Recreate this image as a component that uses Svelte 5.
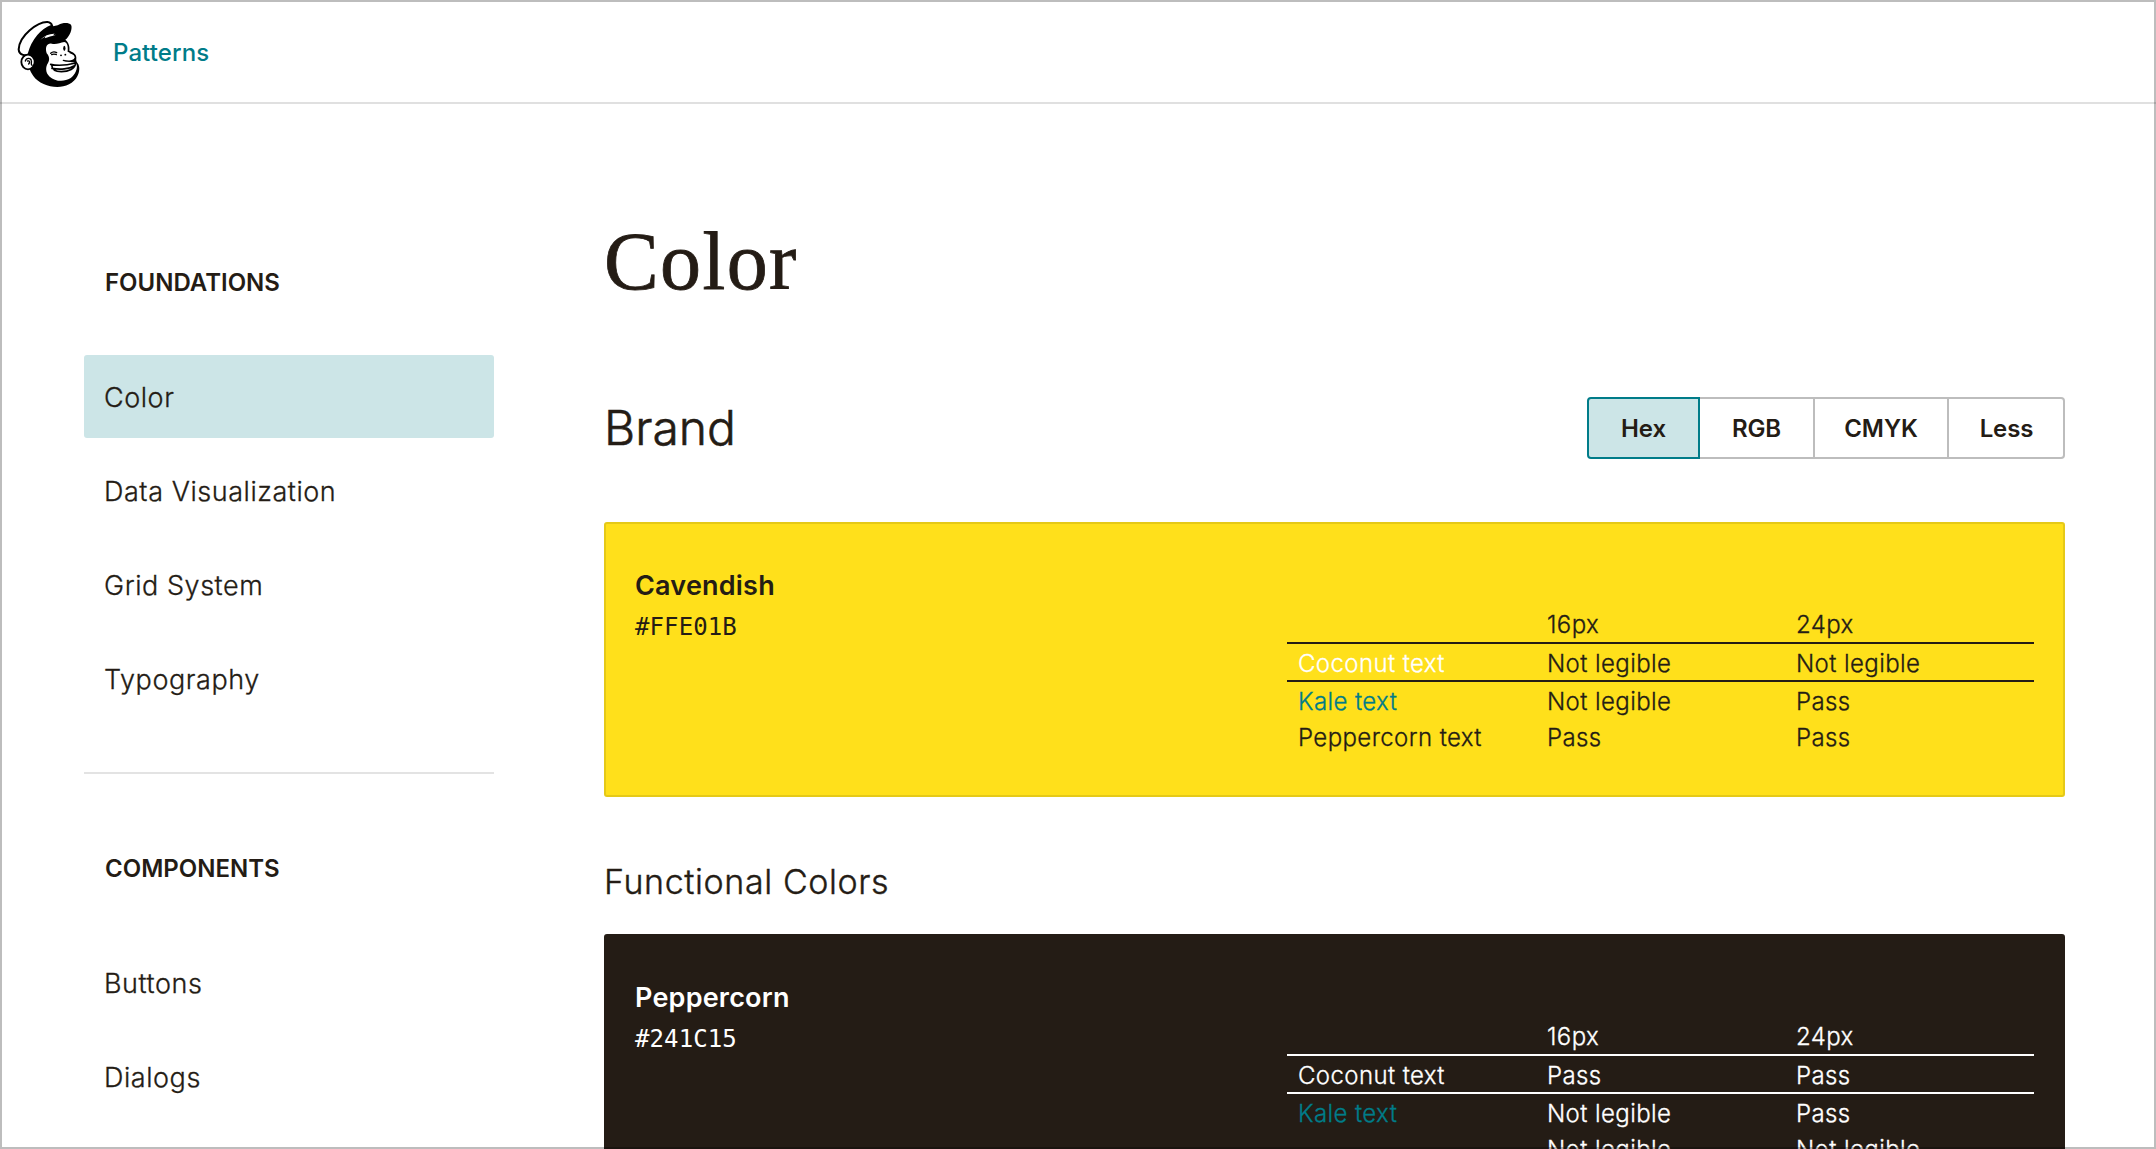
<script>
  const foundations = ['Color', 'Data Visualization', 'Grid System', 'Typography'];
  const components = ['Buttons', 'Dialogs'];
  const formats = ['Hex', 'RGB', 'CMYK', 'Less'];
  const textColors = ['coconut', 'kale', 'peppercorn'];
  const brand = [
    ['Coconut text', 'Not legible', 'Not legible'],
    ['Kale text', 'Not legible', 'Pass'],
    ['Peppercorn text', 'Pass', 'Pass'],
  ];
  const functional = [
    ['Coconut text', 'Pass', 'Pass'],
    ['Kale text', 'Not legible', 'Pass'],
    ['Peppercorn text', 'Not legible', 'Not legible'],
  ];
</script>

{#snippet swatch(name, hex, tone, rows)}
  <article class="card {tone}">
    <div class="label">
      <h4>{name}</h4>
      <code>{hex}</code>
    </div>
    <table>
      <thead><tr><th></th><th>16px</th><th>24px</th></tr></thead>
      <tbody>
        {#each rows as row, i}
          <tr><td class={textColors[i]}>{row[0]}</td><td>{row[1]}</td><td>{row[2]}</td></tr>
        {/each}
      </tbody>
    </table>
  </article>
{/snippet}

<div class="page">
  <header>
    <svg class="logo" viewBox="0 0 228 240" aria-label="Freddie">
      <!-- head and cap brim -->
      <path d="M52 124C58 98 74 66 98 50C108 42 118 37 128 34L131 37C138 34 142 34 146 32C156 26 176 24 183 32C189 42 179 68 166 77C176 84 180 98 178 110C188 114 200 120 199 132C198 138 199 142 203 148C211 158 208 176 202 187C192 208 166 219 142 219C114 219 84 206 70 186C60 172 50 150 52 124Z" />
      <!-- cap crown -->
      <path class="crown" d="M56 120C50 128 27 124 26 106C28 64 84 23 112 24C120 25 125 29 126 35C96 46 68 76 56 120Z" />
      <path class="w" d="M91 77C103 65 120 58 134 59L129 64L139 62C126 67 113 68 104 73L107 67Z" />
      <!-- face -->
      <path class="w" d="M110 118C104 98 112 87 125 89C138 93 150 86 163 84C174 87 174 101 173 114C184 116 195 122 195 131C193 139 180 143 168 140C179 145 193 143 199 149C205 162 195 183 181 193C163 204 135 203 119 188C106 176 106 159 114 147C120 138 118 126 110 118Z" />
      <path class="line" d="M180 116C190 119 197 126 196 132C194 141 177 144 160 139M122 118C127 113 135 113 140 116M125 122C131 118 136 121 139 122" />
      <ellipse cx="163" cy="103" rx="3.4" ry="8" />
      <circle cx="153" cy="124" r="2.8" /><circle cx="166" cy="122" r="2.8" />
      <!-- smile -->
      <path class="line lip" d="M122 151C145 156 173 153 197 147C196 164 176 173 154 173C137 173 126 168 125 153M126 163C150 168 178 165 192 156" />
      <ellipse class="ear" cx="54" cy="144" rx="20" ry="22" />
      <path class="line" d="M46 141C49 131 62 130 64 140C66 146 61 149 66 154M53 141C60 139 60 146 56 150" />
    </svg>
    <a class="brand-link">Patterns</a>
  </header>
  <div class="body">
    <nav>
      <h5>FOUNDATIONS</h5>
      <ul>{#each foundations as item, i}<li class:active={i === 0}>{item}</li>{/each}</ul>
      <hr />
      <h5>COMPONENTS</h5>
      <ul>{#each components as item}<li>{item}</li>{/each}</ul>
    </nav>
    <main>
      <h1>Color</h1>
      <div class="bar">
        <h2>Brand</h2>
        <div class="formats">{#each formats as f}<button class={f.toLowerCase()}>{f}</button>{/each}</div>
      </div>
      {@render swatch('Cavendish', '#FFE01B', 'yellow', brand)}
      <h3>Functional Colors</h3>
      {@render swatch('Peppercorn', '#241C15', 'dark', functional)}
    </main>
  </div>
</div>
<div class="frame"></div>

<style>
  :global(body) { margin: 0; background: #fff; }
  .page { box-sizing: border-box; height: 1149px; overflow: hidden; padding: 0 2px; font-family: Inter, "Liberation Sans", sans-serif; color: #241c15; }
  header { box-sizing: border-box; height: 104px; margin: 0 -2px; display: flex; align-items: center; border-bottom: 2px solid #e0e0e0; }
  .logo { width: 76px; height: 80px; margin: 5px 27px 0 10px; flex: none; }
  .logo .w { fill: #fff; }
  .logo .crown { fill: #fff; stroke: #000; stroke-width: 6; stroke-linejoin: round; }
  .logo .line { fill: none; stroke: #000; stroke-width: 4; stroke-linecap: round; stroke-linejoin: round; }
  .logo .lip { stroke-width: 5; }
  .logo .ear { fill: #fff; stroke: #000; stroke-width: 5.5; }
  .brand-link { color: #007c89; font-size: 24px; font-weight: 500; line-height: 30px; margin-top: 4px; letter-spacing: .1px; }
  .body { display: flex; }
  nav { width: 410px; margin-left: 82px; padding-top: 163px; flex: none; }
  h5 { margin: 0 0 56px; padding-left: 21px; font-size: 24px; line-height: 32px; font-weight: 600; }
  ul { list-style: none; margin: 0; padding: 0; display: grid; gap: 11px; }
  li { box-sizing: border-box; height: 83px; padding-left: 20px; font-size: 27px; line-height: 86px; letter-spacing: .55px; border-radius: 3px; }
  li, h2, h3, th, td { font-weight: 300; -webkit-text-stroke: .3px currentColor; }
  li.active { background: #cce5e7; }
  hr { border: 0; border-top: 2px solid #e3e3e3; margin: 52px 0 79px; }
  main { width: 1461px; margin-left: 110px; padding-top: 106px; }
  h1 { margin: 0; font: 400 82px/104px "Liberation Serif", serif; letter-spacing: 1.4px; -webkit-text-stroke: .8px #241c15; }
  .bar { display: flex; justify-content: space-between; align-items: center; height: 62px; margin-top: 83px; }
  h2 { margin: 0; font-size: 48px; line-height: 62px; -webkit-text-stroke-width: .6px; }
  .formats { display: grid; grid-template-columns: 113px 115px 134px 116px; height: 62px; }
  button { box-sizing: border-box; padding: 0; border: 2px solid #bdbdbd; border-left-width: 0; background: #fff; color: inherit; font: 600 24px Inter, sans-serif; letter-spacing: -.1px; }
  .hex { border: 2px solid #007c89; background: #cce5e7; border-radius: 4px 0 0 4px; }
  .less { border-radius: 0 4px 4px 0; padding-left: 1px; }
  .card { box-sizing: border-box; height: 275px; border: 2px solid; border-radius: 3px; display: flex; justify-content: space-between; padding: 44px 29px 0; }
  .yellow { background: #ffe01b; border-color: #e5c918; margin-top: 63px; }
  .dark { background: #241c15; border-color: #241c15; color: #fff; }
  h4 { margin: 0; font-size: 27px; line-height: 36px; font-weight: 600; letter-spacing: .2px; }
  code { display: block; margin-top: 3px; font: 24px/41px "DejaVu Sans Mono", monospace; letter-spacing: .1px; }
  table { width: 747px; margin-top: 38px; border-collapse: collapse; table-layout: fixed; height: max-content; font-size: 24px; letter-spacing: .4px; }
  th, td { height: 33px; padding: 3px 0 0 11px; line-height: 33px; text-align: left; }
  th { height: 34px; padding-top: 2px; line-height: 34px; }
  thead tr, tbody tr:first-child { border-bottom: 2px solid currentColor; }
  .coconut { color: #fff; }
  .kale { color: #007c89; }
  .peppercorn { color: #241c15; }
  h3 { margin: 60px 0 27px; font-size: 34px; line-height: 50px; letter-spacing: .6px; -webkit-text-stroke-width: .4px; }
  .frame { position: fixed; inset: 0; border: 2px solid rgba(0, 0, 0, .26); pointer-events: none; }
</style>
